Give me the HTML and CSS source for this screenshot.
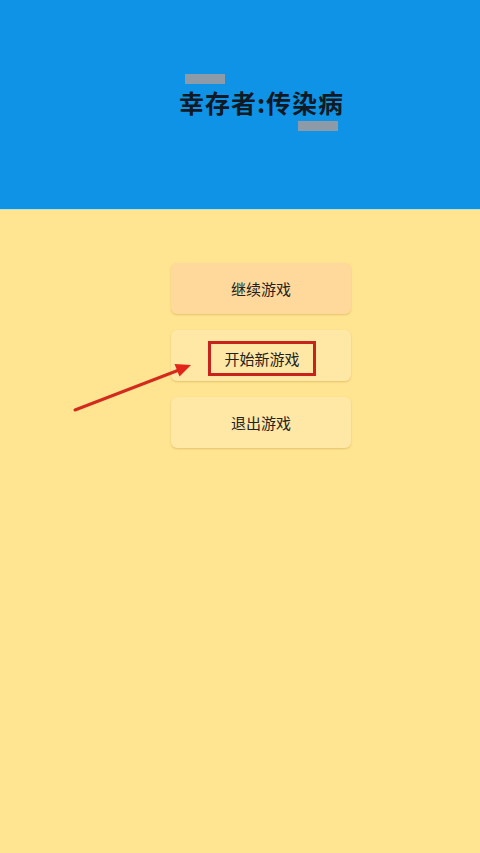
FILE: index.html
```html
<!DOCTYPE html>
<html lang="zh">
<head>
<meta charset="utf-8">
<link rel="stylesheet" href="styles.css">
</head>
<body>
<header class="header">
  <h1 class="title">幸存者:传染病</h1>
  <span class="redact redact-a"></span>
  <span class="redact redact-b"></span>
</header>
<main class="menu">
  <button class="btn btn-continue">继续游戏</button>
  <button class="btn"><span class="mark">开始新游戏</span></button>
  <button class="btn">退出游戏</button>
  <svg class="arrow" width="140" height="70" viewBox="0 0 140 70">
    <line x1="5" y1="60" x2="109" y2="20" stroke="#d32a1e" stroke-width="3" stroke-linecap="round"/>
    <polygon points="121,15 104.5,14 109.5,26.5" fill="#e2241a"/>
  </svg>
</main>
</body>
</html>
```
FILE: styles.css
```css
html, body {
  margin: 0;
  padding: 0;
  width: 480px;
  height: 853px;
  background: #ffe591;
  font-family: "Noto Sans CJK SC", "Noto Sans", sans-serif;
  overflow: hidden;
}
.header {
  position: relative;
  height: 210px;
  background: #0f93e6;
  border-bottom: 1px solid #bfe2c8;
  display: flex;
  align-items: center;
  justify-content: center;
  padding-left: 43px;
  box-sizing: border-box;
}
.title {
  margin: 0;
  padding-bottom: 4px;
  font-size: 25px;
  font-weight: 700;
  color: #111a24;
  letter-spacing: 1px;
  line-height: 1;
}
.redact {
  position: absolute;
  height: 10px;
  width: 40px;
  background: #9a9ca0;
  opacity: 0.9;
}
.redact-a { left: 185px; top: 74px; }
.redact-b { left: 298px; top: 121px; }
.menu {
  position: relative;
  display: flex;
  flex-direction: column;
  gap: 16px;
  padding: 53px 0 0 171px;
}
.btn {
  width: 180px;
  height: 51px;
  border: none;
  border-radius: 6px;
  background: #ffe7a5;
  box-shadow: 0 1px 2px rgba(180, 130, 40, 0.35);
  font-family: "Noto Sans CJK SC", "Noto Sans", sans-serif;
  font-size: 15px;
  color: #222;
  display: flex;
  align-items: center;
  justify-content: center;
  padding: 0;
}
.btn-continue {
  background: #ffd99b;
}
.mark {
  display: inline-flex;
  align-items: center;
  justify-content: center;
  width: 102px;
  height: 29px;
  border: 3px solid #c8221c;
  margin: 5px 0 0 2px;
}
.arrow {
  position: absolute;
  left: 70px;
  top: 140px;
}
```
